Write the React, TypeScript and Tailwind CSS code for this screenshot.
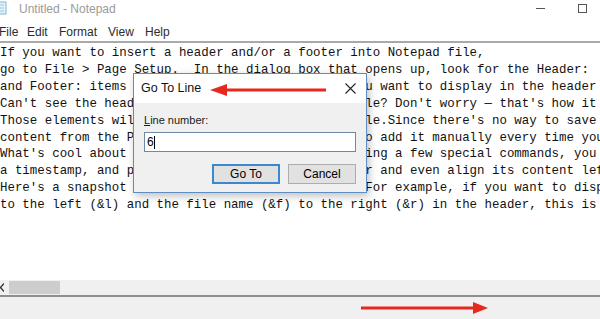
import React from "react";

const lines = [
  "If you want to insert a header and/or a footer into Notepad file,",
  "go to File > Page Setup.  In the dialog box that opens up, look for the Header:",
  "and Footer: items fields and then type in what you want to display in the header",
  "Can't see the header or footer in your Notepad file? Don't worry \u2014 that's how it works",
  "Those elements will only appear when you print file.Since there's no way to save the",
  "content from the Page Setup dialog, you'll have to add it manually every time you print",
  "What's cool about the header/footer is that by using a few special commands, you can add",
  "a timestamp, and page numbers to the header/footer and even align its content left",
  "Here's a snapshot of all the commands available. For example, if you want to display",
  "to the left (&l) and the file name (&f) to the right (&r) in the header, this is what",
];

const ui = "font-['Liberation_Sans',Arial,sans-serif]";

function RedArrow({ width }: { width: number }) {
  return (
    <svg width={width} height={14} viewBox={`0 0 ${width} 14`}>
      <rect x={0} y={5.5} width={width - 12} height={3} fill="#e5291c" />
      <polygon points={`${width - 15},1 ${width},7 ${width - 15},13`} fill="#e5291c" />
    </svg>
  );
}

function GoToLineDialog() {
  return (
    <div
      className={`absolute left-[133px] top-[73px] w-[234px] h-[120px] border border-[#5c8ec4] bg-[#f0f0f0] flex flex-col shadow-[2px_3px_8px_rgba(0,0,0,0.25)] ${ui}`}
    >
      {/* title */}
      <div className="h-[29px] bg-white flex items-center pl-[7px] pr-[8px]">
        <span className="text-[12.5px] text-[#111]">Go To Line</span>
        <div className="ml-[9px] mt-[2px]">
          <svg width={116} height={14} viewBox="0 0 116 14">
            <polygon points="0,7 17,1 17,13" fill="#e5291c" />
            <rect x={15} y={5.5} width={101} height={3} fill="#e5291c" />
          </svg>
        </div>
        <svg className="ml-auto mr-[2px]" width={11} height={11} viewBox="0 0 11 11">
          <path d="M0.5 0.5 L10.5 10.5 M10.5 0.5 L0.5 10.5" stroke="#222" strokeWidth={1.1} />
        </svg>
      </div>
      {/* body */}
      <div className="flex-1 flex flex-col px-[10px] pt-[10px]">
        <span className="text-[11px] leading-[14px] text-[#1a1a1a]">
          <span className="underline">L</span>ine number:
        </span>
        <div className="mt-[5px] h-[20px] w-[212px] bg-white border border-[#6f89aa] flex items-center pl-[2px]">
          <span className="text-[12px] text-black leading-none">6</span>
          <span className="w-px h-[13px] bg-black" />
        </div>
        <div className="mt-[12px] flex justify-end gap-[8px]">
          <button className="w-[68px] h-[20px] bg-[#e1e1e1] border-2 border-[#3c88d0] text-[12px] text-black leading-none">
            Go To
          </button>
          <button className="w-[68px] h-[20px] bg-[#e1e1e1] border border-[#adadad] text-[12px] text-black leading-none">
            Cancel
          </button>
        </div>
      </div>
    </div>
  );
}

export default function App() {
  return (
    <div className="relative w-[600px] h-[319px] overflow-hidden bg-white flex flex-col">
      {/* ── Title bar ── */}
      <div className={`h-[22px] flex items-center ${ui}`}>
        <svg className="self-start mt-[1px]" width={8} height={14} viewBox="0 0 8 14">
          <rect x={-6} y={1} width={12} height={12} fill="#e4f2fb" stroke="#7fb5d8" />
          <path d="M-4 4 H4 M-4 7 H4 M-4 10 H4" stroke="#9cc6e2" />
        </svg>
        <span className="ml-[11px] text-[12px] text-[#9a9a9a] mb-[5px]">Untitled - Notepad</span>
        <div className="ml-auto flex items-center mb-[5px]">
          <span className="w-[9px] h-px bg-[#555]" />
          <span className="ml-[33px] mr-[13px] w-[9px] h-[9px] border border-[#555]" />
        </div>
      </div>

      {/* ── Menu bar ── */}
      <div className={`h-[19px] flex items-center pt-[1px] text-[12px] text-[#2b2b2b] ${ui}`}>
        <span className="w-[28px] -ml-[1px]">File</span>
        <span className="w-[32px]">Edit</span>
        <span className="w-[49px]">Format</span>
        <span className="w-[37px]">View</span>
        <span>Help</span>
      </div>
      <div className="h-[2px] bg-[#a9a9a9]" />

      {/* ── Text area ── */}
      <div className="flex-1 pt-[2px] overflow-hidden font-['Liberation_Mono','DejaVu_Sans_Mono',monospace] text-[12.43px] leading-[16.9px] text-[#111] whitespace-pre">
        {lines.map((l, i) => (
          <div key={i}>{l}</div>
        ))}
      </div>

      {/* ── Horizontal scrollbar ── */}
      <div className="h-[15px] bg-[#f0f0f0] flex items-center">
        <svg width={4} height={9} viewBox="0 0 4 9">
          <path d="M4 0.5 L0.5 4.5 L4 8.5" stroke="#333" strokeWidth={1.3} fill="none" />
        </svg>
        <div className="ml-[5px] w-[51px] h-[13px] bg-[#cdcdcd]" />
      </div>
      <div className="h-[2px] bg-[#8e8e8e]" />

      {/* ── Status bar ── */}
      <div className="h-[22px] bg-[#f0f0f0] flex items-center pl-[361px]">
        <RedArrow width={127} />
      </div>

      <GoToLineDialog />
    </div>
  );
}
